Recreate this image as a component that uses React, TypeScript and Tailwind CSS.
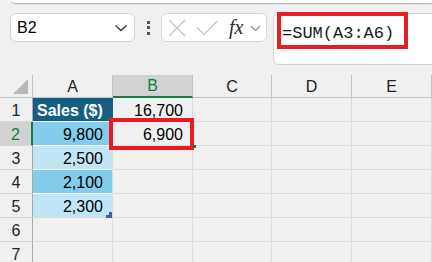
import React from "react";

const COLS = [
  { key: "A", w: 80 },
  { key: "B", w: 80 },
  { key: "C", w: 79 },
  { key: "D", w: 80 },
  { key: "E", w: 80 },
];

type Cell = { text?: string; bg?: string; head?: boolean };

const ROWS: Cell[][] = [
  [{ text: "Sales ($)", head: true }, { text: "16,700" }],
  [{ text: "9,800", bg: "bg-[#83cceb]" }, { text: "6,900" }],
  [{ text: "2,500", bg: "bg-[#c0e6f5]" }],
  [{ text: "2,100", bg: "bg-[#83cceb]" }],
  [{ text: "2,300", bg: "bg-[#c0e6f5]" }],
  [],
  [],
];

export default function App() {
  return (
    <div
      className="relative w-[432px] h-[262px] overflow-hidden bg-[#f0f0f0] text-[#222]"
      style={{ fontFamily: '"Liberation Sans", Arial, sans-serif' }}
    >
      {/* top ribbon edge */}
      <div className="ml-[12px] h-[3px] bg-white rounded-bl-[6px] shadow-[0_1px_1.5px_rgba(0,0,0,0.28)]" />

      {/* toolbar */}
      <div className="flex items-start mt-[10px] pl-[10px] h-[62px]">
        {/* name box */}
        <div className="shrink-0 w-[125px] h-[29px] bg-white border border-[#d2d2d2] rounded-[6px] flex items-center justify-between pl-[6px] pr-[6px]">
          <span className="text-[16px] leading-[20px] text-black">B2</span>
          <svg width="14" height="8" viewBox="0 0 14 8" className="mt-[1px]">
            <path d="M1.5 1.5 L7 6.5 L12.5 1.5" fill="none" stroke="#333" strokeWidth="1.3" />
          </svg>
        </div>
        {/* dots */}
        <div className="shrink-0 w-[26px] h-[29px] flex flex-col items-center justify-center gap-[2.5px]">
          <div className="w-[3px] h-[3px] bg-[#555]" />
          <div className="w-[3px] h-[3px] bg-[#555]" />
          <div className="w-[3px] h-[3px] bg-[#555]" />
        </div>
        {/* buttons */}
        <div className="shrink-0 w-[106px] h-[29px] bg-white border border-[#d6d6d6] rounded-[6px] flex items-center pl-[6px]">
          <svg width="18" height="18" viewBox="0 0 18 18" className="shrink-0">
            <path d="M1 1 L17 17 M17 1 L1 17" stroke="#c2c2c2" strokeWidth="1.2" fill="none" />
          </svg>
          <svg width="22" height="16" viewBox="0 0 22 16" className="shrink-0 ml-[10px]">
            <path d="M1 7.5 L8 14.5 L21 1.5" stroke="#c2c2c2" strokeWidth="1.2" fill="none" />
          </svg>
          <span
            className="shrink-0 ml-[11px] text-[20px] leading-[22px] italic text-[#2a2a2a] -mt-[1px]"
            style={{ fontFamily: '"Liberation Serif", "Times New Roman", serif' }}
          >
            fx
          </span>
          <svg width="11" height="7" viewBox="0 0 11 7" className="shrink-0 ml-[7px] mt-[1px]">
            <path d="M1 1 L5.5 5.5 L10 1" fill="none" stroke="#8a8a8a" strokeWidth="1.1" />
          </svg>
        </div>
        {/* formula bar */}
        <div className="shrink-0 relative ml-[6px] w-[180px] h-[52px] bg-white border border-[#d2d2d2] rounded-[6px] pl-[8px] pt-[7px]">
          <span
            className="text-[17px] leading-[20px] text-[#1a1a1a]"
            style={{ fontFamily: '"Liberation Mono", "Courier New", monospace' }}
          >
            =SUM(A3:A6)
          </span>
          <div className="absolute left-[3px] -top-[2px] w-[131px] h-[37px] border-[4px] border-[#e81c24]" />
        </div>
      </div>

      {/* grid */}
      <div className="flex flex-col">
        {/* column header */}
        <div className="flex h-[23px]">
          <div className="shrink-0 relative w-[33px] h-[23px] border-r border-b border-[#c4c4c4]">
            <svg width="16" height="16" viewBox="0 0 16 16" className="absolute left-[13px] top-[4px]">
              <polygon points="15,0 15,15 0,15" fill="#b9b9b9" />
            </svg>
          </div>
          {COLS.map((c) => {
            const sel = c.key === "B";
            return (
              <div
                key={c.key}
                style={{ width: c.w }}
                className={
                  sel
                    ? "shrink-0 h-[23px] flex items-end justify-center leading-[20px] text-[16px] border-r border-[#c4c4c4] border-b-2 border-b-[#137e43] bg-[#d2d2d2] text-[#137e43]"
                    : "shrink-0 h-[23px] flex items-end justify-center leading-[20px] text-[16px] border-r border-b border-[#c4c4c4] text-[#222]"
                }
              >
                {c.key}
              </div>
            );
          })}
        </div>

        {ROWS.map((row, ri) => {
          const selRow = ri === 1;
          return (
            <div key={ri} className="flex h-[24px]">
              <div
                className={
                  selRow
                    ? "shrink-0 w-[33px] h-[24px] flex items-end justify-center leading-[20px] text-[16px] border-b border-[#d6d6d6] border-r-2 border-r-[#137e43] bg-[#d2d2d2] text-[#137e43]"
                    : "shrink-0 w-[33px] h-[24px] flex items-end justify-center leading-[20px] text-[16px] border-b border-[#d6d6d6] border-r border-r-[#a8a8a8] text-[#222]"
                }
              >
                {ri + 1}
              </div>
              {COLS.map((c, ci) => {
                const cell = row[ci];
                let cls =
                  "shrink-0 h-[24px] flex items-end leading-[20px] text-[16px] border-r border-b border-[#dcdcdc] ";
                if (cell?.head) {
                  cls +=
                    "bg-[#156082] text-white font-bold justify-start pl-[4px] border-b-white border-r-[#156082]";
                } else if (cell?.bg) {
                  cls += cell.bg + " text-black justify-end pr-[9px] ";
                  cls += ri === 4 ? "" : "border-b-white";
                } else {
                  cls += "text-black justify-end pr-[9px]";
                }
                return (
                  <div key={c.key} style={{ width: c.w }} className={cls}>
                    {cell?.text}
                  </div>
                );
              })}
            </div>
          );
        })}
      </div>

      {/* overlays */}
      <div className="absolute left-[109px] top-[118px] w-[85px] h-[32px] border-[4px] border-[#e81c24]" />
      <div className="absolute left-[193px] top-[145px] w-[3px] h-[3px] bg-[#137e43]" />
      <svg width="6" height="6" viewBox="0 0 6 6" className="absolute left-[106px] top-[212px]">
        <polygon points="6,0 6,6 0,6 0,3 3,3 3,0" fill="#4656b4" />
      </svg>
    </div>
  );
}
